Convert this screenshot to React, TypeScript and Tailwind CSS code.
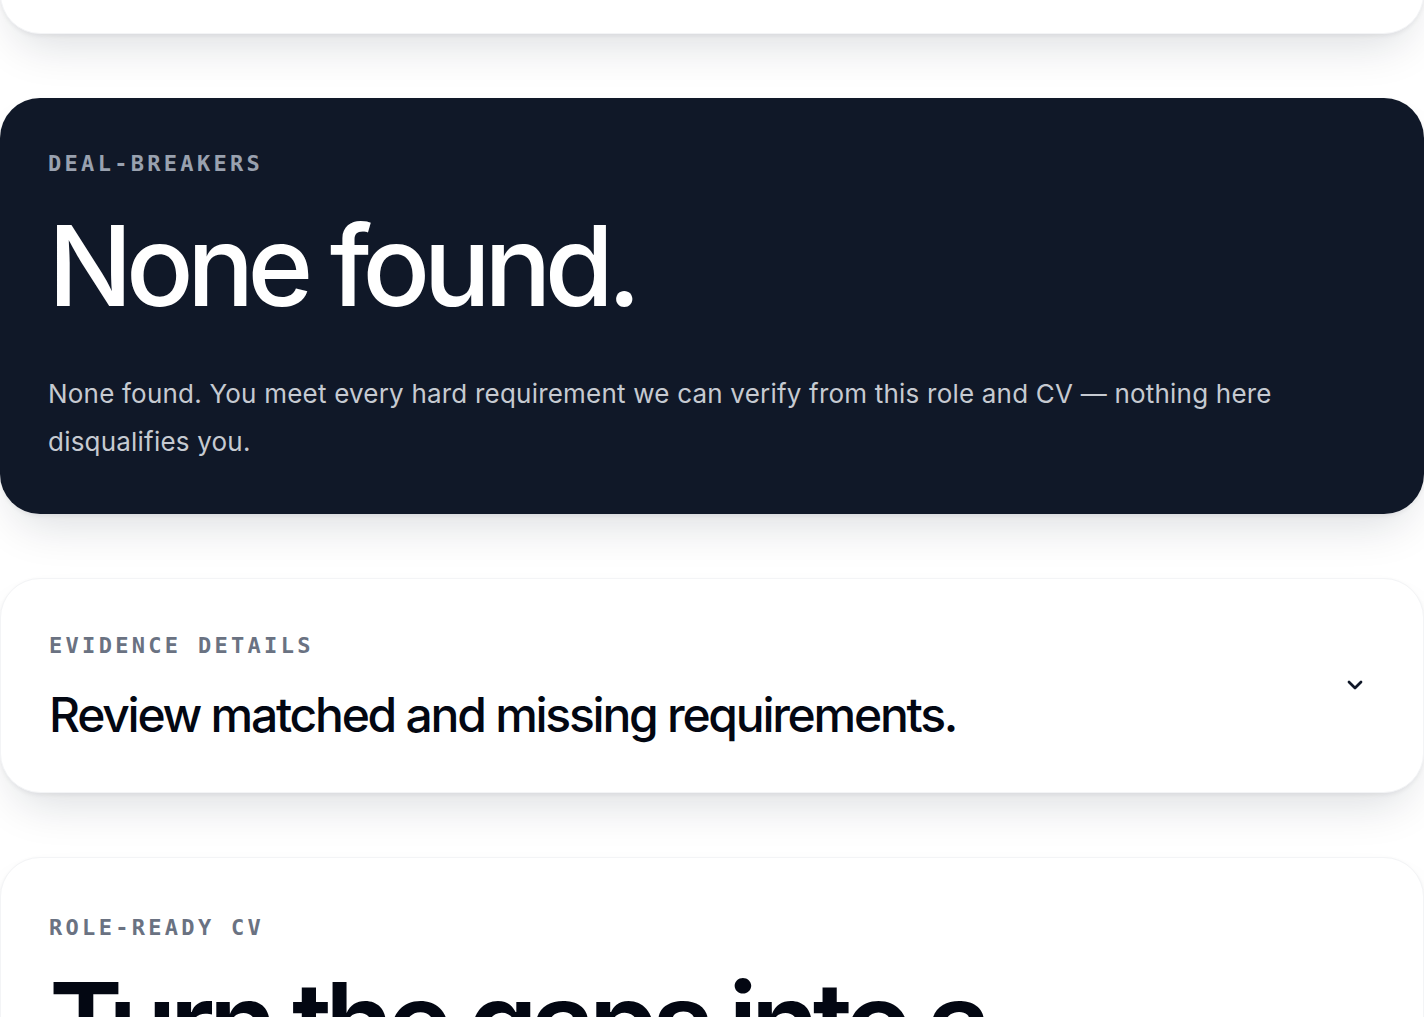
import { ChevronDown } from 'lucide-react';

const SANS = 'font-["Inter","Noto_Sans",sans-serif]';
const MONO = 'font-["DejaVu_Sans_Mono","Liberation_Mono",monospace]';

const CARD_SHADOW = 'shadow-[0_24px_48px_-16px_rgba(15,23,42,0.16),0_2px_4px_rgba(15,23,42,0.06)]';

function Eyebrow({ children, dark }: { children: string; dark?: boolean }) {
  return (
    <div
      className={`${MONO} pt-1 text-[22px] font-bold uppercase leading-7 tracking-[0.15em] ${
        dark ? 'text-gray-400' : 'text-gray-500'
      }`}
    >
      {children}
    </div>
  );
}

export default function App() {
  return (
    <div className={`${SANS} min-h-screen overflow-hidden bg-white`}>
      <div className="flex flex-col gap-16 pb-24">
        {/* card scrolled mostly out of view */}
        <div className={`-mt-[166px] h-[200px] rounded-[40px] border border-gray-100 bg-white ${CARD_SHADOW}`} />

        {/* deal-breakers */}
        <section className={`rounded-[40px] bg-gray-900 p-12 ${CARD_SHADOW}`}>
          <Eyebrow dark>Deal-breakers</Eyebrow>
          <h2 className="mt-[31px] text-[112px] font-medium leading-none tracking-[-0.06em] text-white">
            None found.
          </h2>
          <p className="mt-[49px] text-[26px] leading-[48px] tracking-[0.008em] text-[#c6cad1]">
            None found. You meet every hard requirement we can verify from this role and CV — nothing here
            disqualifies you.
          </p>
        </section>

        {/* evidence details */}
        <section className={`flex items-center justify-between rounded-[40px] border border-gray-100 bg-white px-12 pb-[50px] pt-[49px] ${CARD_SHADOW}`}>
          <div>
            <Eyebrow>Evidence details</Eyebrow>
            <h3 className="mt-[27px] text-5xl font-medium leading-[1.15] tracking-[-0.047em] text-gray-950">
              Review matched and missing requirements.
            </h3>
          </div>
          <button className="flex h-10 w-10 items-center justify-center text-gray-900">
            <ChevronDown className="h-6 w-6" strokeWidth={2.75} />
          </button>
        </section>

        {/* role-ready cv */}
        <section className={`rounded-[40px] border border-gray-100 bg-white px-12 pt-[52px] pb-12 ${CARD_SHADOW}`}>
          <Eyebrow>Role-ready CV</Eyebrow>
          <h2 className="mt-[24px] text-[112px] font-semibold leading-none tracking-[-0.06em] text-gray-950">
            Turn the gaps into a stronger CV.
          </h2>
        </section>
      </div>
    </div>
  );
}
